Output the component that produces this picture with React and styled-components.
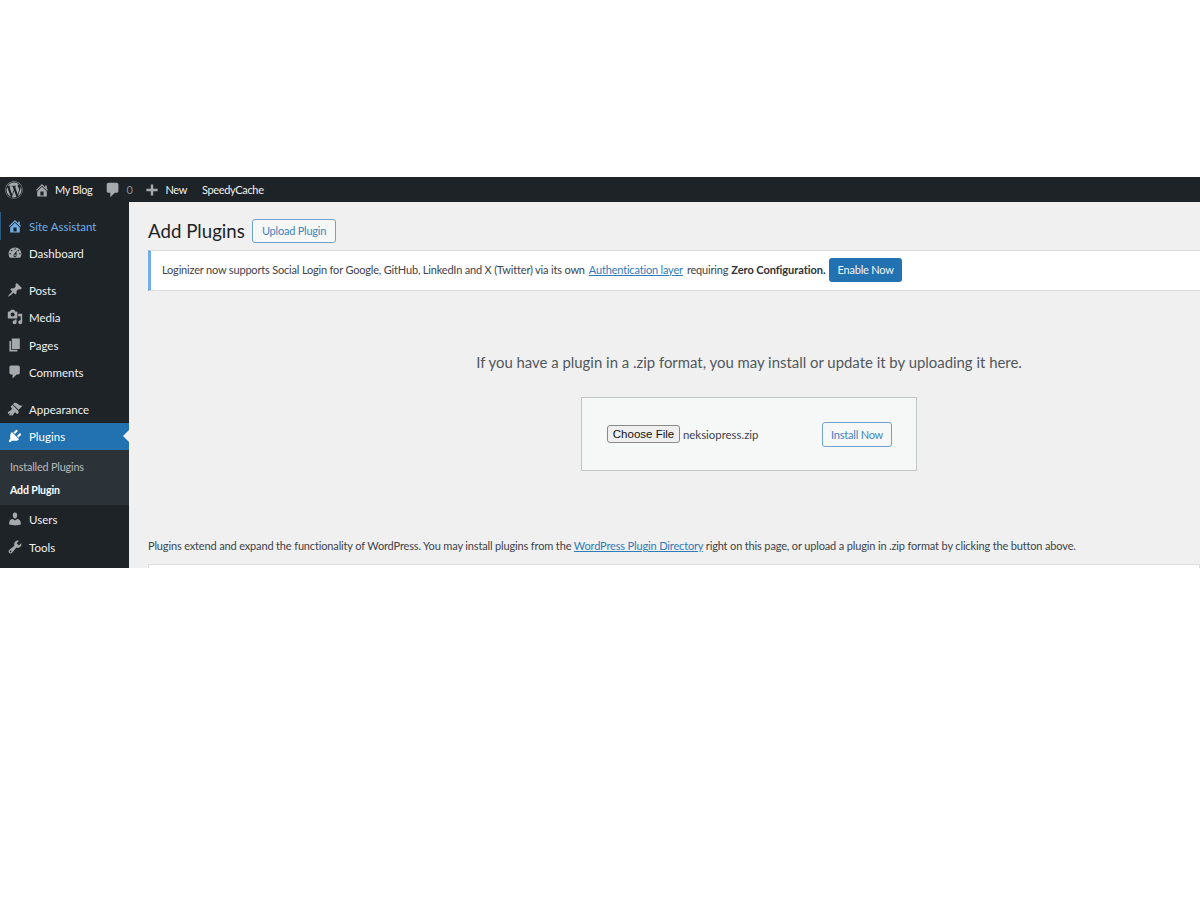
import React from 'react'
import styled, { createGlobalStyle } from 'styled-components'
import { FaWordpress } from 'react-icons/fa'

const GlobalStyle = createGlobalStyle`
    html, body {
        margin:0;
        padding:0;
        background:#fff;
    }
    * {
        box-sizing:border-box;
    }
`

const Page = styled.div`
    width:1200px;
    height:900px;
    padding-top:177px;
    font-family:Lato, sans-serif;
    font-size:11px;
    letter-spacing:-0.15px;
    color:#3c434a;
    overflow:hidden;
`
const Frame = styled.div`
    height:391px;
    display:flex;
    flex-flow:column nowrap;
    overflow:hidden;
`
const TopBar = styled.div`
    flex:0 0 25px;
    background:#1d2327;
    display:flex;
    align-items:center;
    padding-left:5px;
    color:#f0f0f1;
    letter-spacing:-0.35px;
`
const BarItem = styled.div`
    display:flex;
    align-items:center;
    margin-left:${p => p.$gap || 0}px;
    color:${p => p.$dim ? '#8c8f94' : '#f0f0f1'};
    svg {
        display:block;
        margin-right:${p => p.$iconGap || 0}px;
        fill:#a7aaad;
    }
`
const Body = styled.div`
    flex:1 1 0%;
    min-height:0;
    display:flex;
`
const Sidebar = styled.div`
    flex:0 0 129px;
    background:#1d2327;
    padding-top:10px;
    display:flex;
    flex-flow:column nowrap;
`
const MenuRow = styled.div`
    position:relative;
    flex:0 0 auto;
    height:${p => p.$h || 27.5}px;
    margin-top:${p => p.$sep ? 9 : 0}px;
    display:flex;
    align-items:center;
    padding-left:${p => p.$marker ? 6 : 7}px;
    font-size:11.5px;
    letter-spacing:0;
    color:${p => p.$active ? '#fff' : p.$blue ? '#72aee6' : '#f0f0f1'};
    background:${p => p.$active ? '#2271b1' : 'transparent'};
    border-left:${p => p.$marker ? '1px solid #2c5a80' : 'none'};
    svg {
        display:block;
        flex:0 0 16px;
        margin-right:6px;
        fill:${p => p.$active ? '#fff' : p.$blue ? '#72aee6' : '#a7aaad'};
    }
    ${p => p.$active && `
        &::after {
            content:'';
            position:absolute;
            right:0;
            top:50%;
            margin-top:-6px;
            border:6px solid transparent;
            border-right-color:#f0f0f1;
            border-left-width:0;
        }
    `}
`
const MenuLabel = styled.span`
    padding-top:1px;
`
const SubMenu = styled.div`
    flex:0 0 55px;
    background:#2c3338;
    padding-top:5px;
    display:flex;
    flex-flow:column nowrap;
`
const SubItem = styled.div`
    height:23px;
    display:flex;
    align-items:center;
    padding-left:10px;
    font-size:${p => p.$current ? 10.6 : 10.8}px;
    font-weight:${p => p.$current ? 700 : 400};
    color:${p => p.$current ? '#fff' : 'rgba(240,246,252,.7)'};
`
const Main = styled.div`
    flex:1 1 0%;
    min-width:0;
    background:#f0f0f0;
    overflow:hidden;
    padding:16px 0 0 19px;
`
const Heading = styled.div`
    height:25px;
    display:flex;
    align-items:center;
`
const Title = styled.h1`
    margin:0 7px 0 0;
    font-size:18.7px;
    font-weight:400;
    letter-spacing:0;
    color:#1d2327;
`
const OutlineButton = styled.div`
    height:${p => p.$h}px;
    padding:0 ${p => p.$px || 8}px;
    display:flex;
    align-items:center;
    border:1px solid #6fa3cf;
    border-radius:3px;
    background:#f6f7f7;
    color:#3f84bb;
    font-size:11px;
    letter-spacing:-0.22px;
`
const Notice = styled.div`
    margin-top:7px;
    height:41px;
    background:#fff;
    border:1px solid #dcdcde;
    border-left:3px solid #72aee6;
    border-right:none;
    display:flex;
    align-items:center;
    padding:0 0 2px 11px;
    letter-spacing:-0.18px;
    white-space:nowrap;
`
const Link = styled.a`
    color:#2f7bb8;
    text-decoration:underline;
    margin:${p => p.$m || 0};
`
const Strong = styled.b`
    font-weight:700;
    letter-spacing:-0.05px;
    color:#2c3338;
    margin-left:3px;
`
const PrimaryButton = styled.div`
    margin-left:4px;
    height:24px;
    padding:0 8px;
    display:flex;
    align-items:center;
    border-radius:3px;
    background:#2271b1;
    color:#f0f6fc;
    font-size:11px;
    letter-spacing:-0.2px;
`
const UploadArea = styled.div`
    width:1202px;
    padding-top:61px;
    display:flex;
    flex-flow:column nowrap;
    align-items:center;
`
const UploadText = styled.p`
    margin:0;
    height:20px;
    line-height:20px;
    font-size:14.9px;
    letter-spacing:0;
    color:#50575e;
`
const UploadBox = styled.div`
    margin-top:25px;
    width:336px;
    height:74px;
    background:#f6f7f7;
    border:1px solid #c3c4c7;
    display:flex;
    align-items:center;
    padding:0 24px 0 25px;
`
const ChooseFile = styled.button`
    height:18px;
    width:73px;
    padding:0;
    background:#efefef;
    border:1px solid #8a8a8a;
    border-radius:3px;
    color:#111;
    font-family:"Liberation Sans", sans-serif;
    font-size:11.5px;
`
const FileName = styled.span`
    margin-left:3px;
    font-size:11.4px;
    letter-spacing:0;
    flex:1 1 0%;
`
const HelpText = styled.p`
    margin:65px 0 0;
    height:20px;
    line-height:20px;
    white-space:nowrap;
`
const WhiteCard = styled.div`
    margin-top:8px;
    height:20px;
    background:#fff;
    border:1px solid #dcdcde;
`

const dash = {
    home: 'M16 8.5l1.53 1.53-1.06 1.06L10 4.62l-6.47 6.47-1.06-1.06L10 2.5l4 4v-2h2v4zm-6-2.46l6 5.99V18H4v-5.97zM12 17v-5H8v5h4z',
    comment: 'M5 2h9c1.1 0 2 .9 2 2v7c0 1.1-.9 2-2 2h-2l-5 5v-5H5c-1.1 0-2-.9-2-2V4c0-1.1.9-2 2-2z',
    plus: 'M17 8.5v3h-5.5V17h-3v-5.5H3v-3h5.5V3h3v5.5H17z',
    dashboard: 'M3.76 16h12.48c1.1-1.37 1.76-3.11 1.76-5 0-4.42-3.58-8-8-8s-8 3.58-8 8c0 1.89.66 3.63 1.76 5zM10 4c.55 0 1 .45 1 1s-.45 1-1 1-1-.45-1-1 .45-1 1-1zM6 6c.55 0 1 .45 1 1s-.45 1-1 1-1-.45-1-1 .45-1 1-1zm8 0c.55 0 1 .45 1 1s-.45 1-1 1-1-.45-1-1 .45-1 1-1zm-5.37 5.55L12 7v6c0 1.1-.9 2-2 2s-2-.9-2-2c0-.57.24-1.08.63-1.45zM4 10c.55 0 1 .45 1 1s-.45 1-1 1-1-.45-1-1 .45-1 1-1zm12 0c.55 0 1 .45 1 1s-.45 1-1 1-1-.45-1-1 .45-1 1-1zm-5 3c0-.55-.45-1-1-1s-1 .45-1 1 .45 1 1 1 1-.45 1-1z',
    post: 'M10.44 3.02l1.82-1.82 6.36 6.35-1.83 1.82c-1.05-.68-2.48-.57-3.41.36l-.75.75c-.92.93-1.04 2.35-.35 3.41l-1.83 1.82-2.41-2.41-2.8 2.79c-.42.42-3.38 2.71-3.8 2.29s1.86-3.39 2.28-3.81l2.79-2.79L4.1 9.36l1.83-1.82c1.05.69 2.48.57 3.4-.36l.75-.75c.93-.92 1.05-2.35.36-3.41z',
    media: 'M13 11V4c0-.55-.45-1-1-1h-1.67L9 1H5L3.67 3H2c-.55 0-1 .45-1 1v7c0 .55.45 1 1 1h10c.55 0 1-.45 1-1zM7 4.5c1.38 0 2.5 1.12 2.5 2.5S8.38 9.5 7 9.5 4.5 8.38 4.5 7 5.62 4.5 7 4.5zM14 6h5v10.5c0 1.38-1.12 2.5-2.5 2.5S14 17.88 14 16.5s1.12-2.5 2.5-2.5c.17 0 .34.02.5.05V9h-3V6zm-4 8.05V13h2v3.5c0 1.38-1.12 2.5-2.5 2.5S7 17.88 7 16.5 8.12 14 9.5 14c.17 0 .34.02.5.05z',
    page: 'M6 15V2h10v13H6zm-1 1h8v2H3V5h2v11z',
    appearance: 'M14.48 11.06L7.41 3.99l1.5-1.5c.5-.56 2.3-.47 3.51.32 1.21.8 1.43 1.28 2.91 2.1 1.18.64 2.45 1.26 4.45.85zm-.71.71L6.7 4.7 4.93 6.47c-.39.39-.39 1.02 0 1.41l1.06 1.06c.39.39.39 1.03 0 1.42-.6.6-1.43 1.11-2.21 1.69-.35.26-.7.53-1.01.84C1.43 13.23.4 14.91 1.53 16.04c.25.25.74.24 1 .01.41-.41 1.17-1.08 2.02-1.5-.23.25-.45.51-.7.81-.57.66-1.52 1.79-.59 2.72.25.25.76.25 1 .01.31-.31.69-.62 1.07-.96.34-.31.67-.63.93-.98-.15.64-.62 1.25-.63 1.62 0 .31.15.64.42.7.31.07.62-.14.86-.37 1.05-1.07 1.84-2.6 2.48-3.35.35-.45 1-.45 1.42 0l1.06 1.06c.39.39 1.02.39 1.41 0l1.77-1.77z',
    plugins: 'M13.11 4.36L9.87 7.6 8 5.73l3.24-3.24c.35-.34 1.05-.2 1.56.32.52.51.66 1.21.31 1.55zm-8 1.77l.91-1.12 9.01 9.01-1.19.84c-.71.71-2.63 1.16-3.82 1.16H6.14L4.9 17.26c-.59.59-1.54.59-2.12 0-.59-.58-.59-1.53 0-2.12l1.24-1.24v-3.88c0-1.13.4-3.19 1.09-3.89zm7.26 3.97l3.24-3.24c.34-.35 1.04-.21 1.55.31.52.51.66 1.21.31 1.55l-3.24 3.25z',
    users: 'M10 9.25c-2.27 0-2.73-3.44-2.73-3.44C7 4.02 7.82 2 9.97 2c2.16 0 2.98 2.02 2.71 3.81 0 0-.41 3.44-2.68 3.44zm0 2.57L12.72 10c2.39 0 4.52 2.33 4.52 4.53v2.49s-3.65 1.13-7.24 1.13c-3.65 0-7.24-1.13-7.24-1.13v-2.49c0-2.25 1.94-4.48 4.47-4.48z',
    tools: 'M16.68 9.77c-1.34 1.34-3.3 1.67-4.95.99l-5.41 6.52c-.99.99-2.59.99-3.58 0s-.99-2.59 0-3.57l6.52-5.42c-.68-1.65-.35-3.61.99-4.95 1.28-1.28 3.12-1.62 4.72-1.06l-2.89 2.89 2.82 2.82 2.86-2.87c.53 1.58.18 3.39-1.08 4.65zM3.81 16.21c.4.39 1.04.39 1.43 0 .4-.4.4-1.04 0-1.43-.39-.4-1.03-.4-1.43 0-.39.39-.39 1.03 0 1.43z',
}

const Dash = ({ name, size = 16 }) => (
    <svg width={size} height={size} viewBox="0 0 20 20"><path d={dash[name]} /></svg>
)

const menu = [
    { label: 'Site Assistant', icon: 'home', blue: true, marker: true },
    { label: 'Dashboard', icon: 'dashboard' },
    { label: 'Posts', icon: 'post', sep: true },
    { label: 'Media', icon: 'media' },
    { label: 'Pages', icon: 'page' },
    { label: 'Comments', icon: 'comment' },
    { label: 'Appearance', icon: 'appearance', sep: true },
    { label: 'Plugins', icon: 'plugins', active: true },
]

const App = () => (
    <Page>
        <GlobalStyle />
        <Frame>
            <TopBar>
                <BarItem><FaWordpress size={18} /></BarItem>
                <BarItem $gap={11} $iconGap={5}><Dash name="home" size={16} />My Blog</BarItem>
                <BarItem $gap={12} $iconGap={4} $dim><Dash name="comment" size={18} />0</BarItem>
                <BarItem $gap={12} $iconGap={5}><Dash name="plus" size={16} />New</BarItem>
                <BarItem $gap={15}>SpeedyCache</BarItem>
            </TopBar>
            <Body>
                <Sidebar>
                    {menu.map(m => (
                        <MenuRow key={m.label} $blue={m.blue} $marker={m.marker} $sep={m.sep} $active={m.active}>
                            <Dash name={m.icon} />
                            <MenuLabel>{m.label}</MenuLabel>
                        </MenuRow>
                    ))}
                    <SubMenu>
                        <SubItem>Installed Plugins</SubItem>
                        <SubItem $current>Add Plugin</SubItem>
                    </SubMenu>
                    <MenuRow $h={28}><Dash name="users" /><MenuLabel>Users</MenuLabel></MenuRow>
                    <MenuRow><Dash name="tools" /><MenuLabel>Tools</MenuLabel></MenuRow>
                </Sidebar>
                <Main>
                    <Heading>
                        <Title>Add Plugins</Title>
                        <OutlineButton $h={24} $px={9}>Upload Plugin</OutlineButton>
                    </Heading>
                    <Notice>
                        Loginizer now supports Social Login for Google, GitHub, LinkedIn and X (Twitter) via its own
                        <Link $m="0 4px">Authentication layer</Link>
                        requiring
                        <Strong>Zero Configuration.</Strong>
                        <PrimaryButton>Enable Now</PrimaryButton>
                    </Notice>
                    <UploadArea>
                        <UploadText>If you have a plugin in a .zip format, you may install or update it by uploading it here.</UploadText>
                        <UploadBox>
                            <ChooseFile>Choose File</ChooseFile>
                            <FileName>neksiopress.zip</FileName>
                            <OutlineButton $h={25}>Install Now</OutlineButton>
                        </UploadBox>
                    </UploadArea>
                    <HelpText>
                        Plugins extend and expand the functionality of WordPress. You may install plugins from the <Link>WordPress Plugin Directory</Link> right on this page, or upload a plugin in .zip format by clicking the button above.
                    </HelpText>
                    <WhiteCard />
                </Main>
            </Body>
        </Frame>
    </Page>
)

export default App
